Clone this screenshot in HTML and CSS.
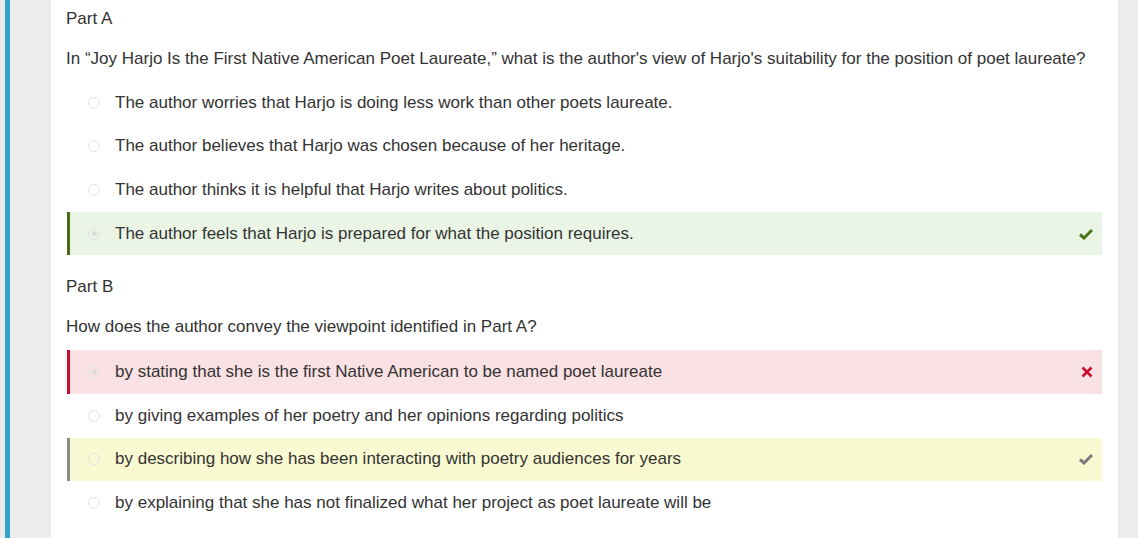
FILE: index.html
```html
<!DOCTYPE html>
<html>
<head>
<meta charset="utf-8">
<link rel="stylesheet" href="styles.css">
</head>
<body>
<div class="page">
  <div class="accent"></div>
  <div class="gutter"></div>
  <main class="panel">
    <section class="part part-a">
      <div class="part-title">Part A</div>
      <div class="question">In “Joy Harjo Is the First Native American Poet Laureate,” what is the author's view of Harjo's suitability for the position of poet laureate?</div>
      <div class="options">
        <div class="opt"><span class="radio"></span><span class="label">The author worries that Harjo is doing less work than other poets laureate.</span></div>
        <div class="opt"><span class="radio"></span><span class="label">The author believes that Harjo was chosen because of her heritage.</span></div>
        <div class="opt"><span class="radio"></span><span class="label">The author thinks it is helpful that Harjo writes about politics.</span></div>
        <div class="opt opt-correct"><span class="radio radio-on"></span><span class="label">The author feels that Harjo is prepared for what the position requires.</span>
          <svg class="mark" width="14" height="12" viewBox="0 0 14 12"><path d="M1 6.5 L5 10 L13 2" fill="none" stroke="#4a7418" stroke-width="3"/></svg>
        </div>
      </div>
    </section>
    <section class="part part-b">
      <div class="part-title">Part B</div>
      <div class="question">How does the author convey the viewpoint identified in Part A?</div>
      <div class="options">
        <div class="opt opt-wrong"><span class="radio radio-on"></span><span class="label">by stating that she is the first Native American to be named poet laureate</span>
          <svg class="mark" width="12" height="12" viewBox="0 0 12 12"><path d="M1.5 1.5 L10.5 10.5 M10.5 1.5 L1.5 10.5" fill="none" stroke="#c8102e" stroke-width="2.6"/></svg>
        </div>
        <div class="opt"><span class="radio"></span><span class="label">by giving examples of her poetry and her opinions regarding politics</span></div>
        <div class="opt opt-answer"><span class="radio"></span><span class="label">by describing how she has been interacting with poetry audiences for years</span>
          <svg class="mark" width="14" height="12" viewBox="0 0 14 12"><path d="M1 6.5 L5 10 L13 2" fill="none" stroke="#7a7a7a" stroke-width="3"/></svg>
        </div>
        <div class="opt"><span class="radio"></span><span class="label">by explaining that she has not finalized what her project as poet laureate will be</span></div>
      </div>
    </section>
  </main>
  <div class="gutter-right"></div>
</div>
</body>
</html>
```

FILE: styles.css
```css
* { box-sizing: border-box; }
html, body {
  margin: 0;
  padding: 0;
  background: #ececec;
  font-family: "Liberation Sans", Arial, sans-serif;
  font-size: 17px;
  color: #333;
}
.page {
  display: flex;
  height: 538px;
  overflow: hidden;
}
.accent {
  width: 5px;
  margin-left: 5px;
  background: #36a2cf;
  flex: none;
}
.gutter {
  width: 41px;
  flex: none;
  background: #ececec;
}
.panel {
  width: 1067px;
  flex: none;
  background: #fff;
  padding: 8px 16px 0 15px;
}
.gutter-right {
  flex: 1;
}
.part-title {
  line-height: 22px;
  margin-bottom: 18px;
}
.question {
  line-height: 22px;
  margin-bottom: 12px;
}
.part-a .question {
  margin-bottom: 11px;
}
.part-b {
  margin-top: 21px;
}
.options {
  margin-left: 1px;
}
.opt {
  display: flex;
  align-items: center;
  height: 43.6px;
  padding-left: 18px;
  padding-right: 9px;
  border-left: 3px solid transparent;
}
.radio {
  width: 12px;
  height: 12px;
  border-radius: 50%;
  border: 1px solid #e4e4e4;
  background: #fff;
  flex: none;
  position: relative;
}
.radio-on::after {
  content: "";
  position: absolute;
  left: 2.5px;
  top: 2.5px;
  width: 5px;
  height: 5px;
  border-radius: 50%;
  background: #dcdcdc;
}
.label {
  margin-left: 15px;
  flex: 1;
  line-height: 22px;
}
.mark { flex: none; }
.opt-correct {
  background: #eaf5e6;
  border-left-color: #4c6a14;
}
.opt-correct .radio, .opt-wrong .radio, .opt-answer .radio {
  background: transparent;
}
.opt-wrong {
  background: #fae1e3;
  border-left-color: #c8102e;
}
.opt-answer {
  background: #fafad2;
  border-left-color: #8a8a8a;
}
```
